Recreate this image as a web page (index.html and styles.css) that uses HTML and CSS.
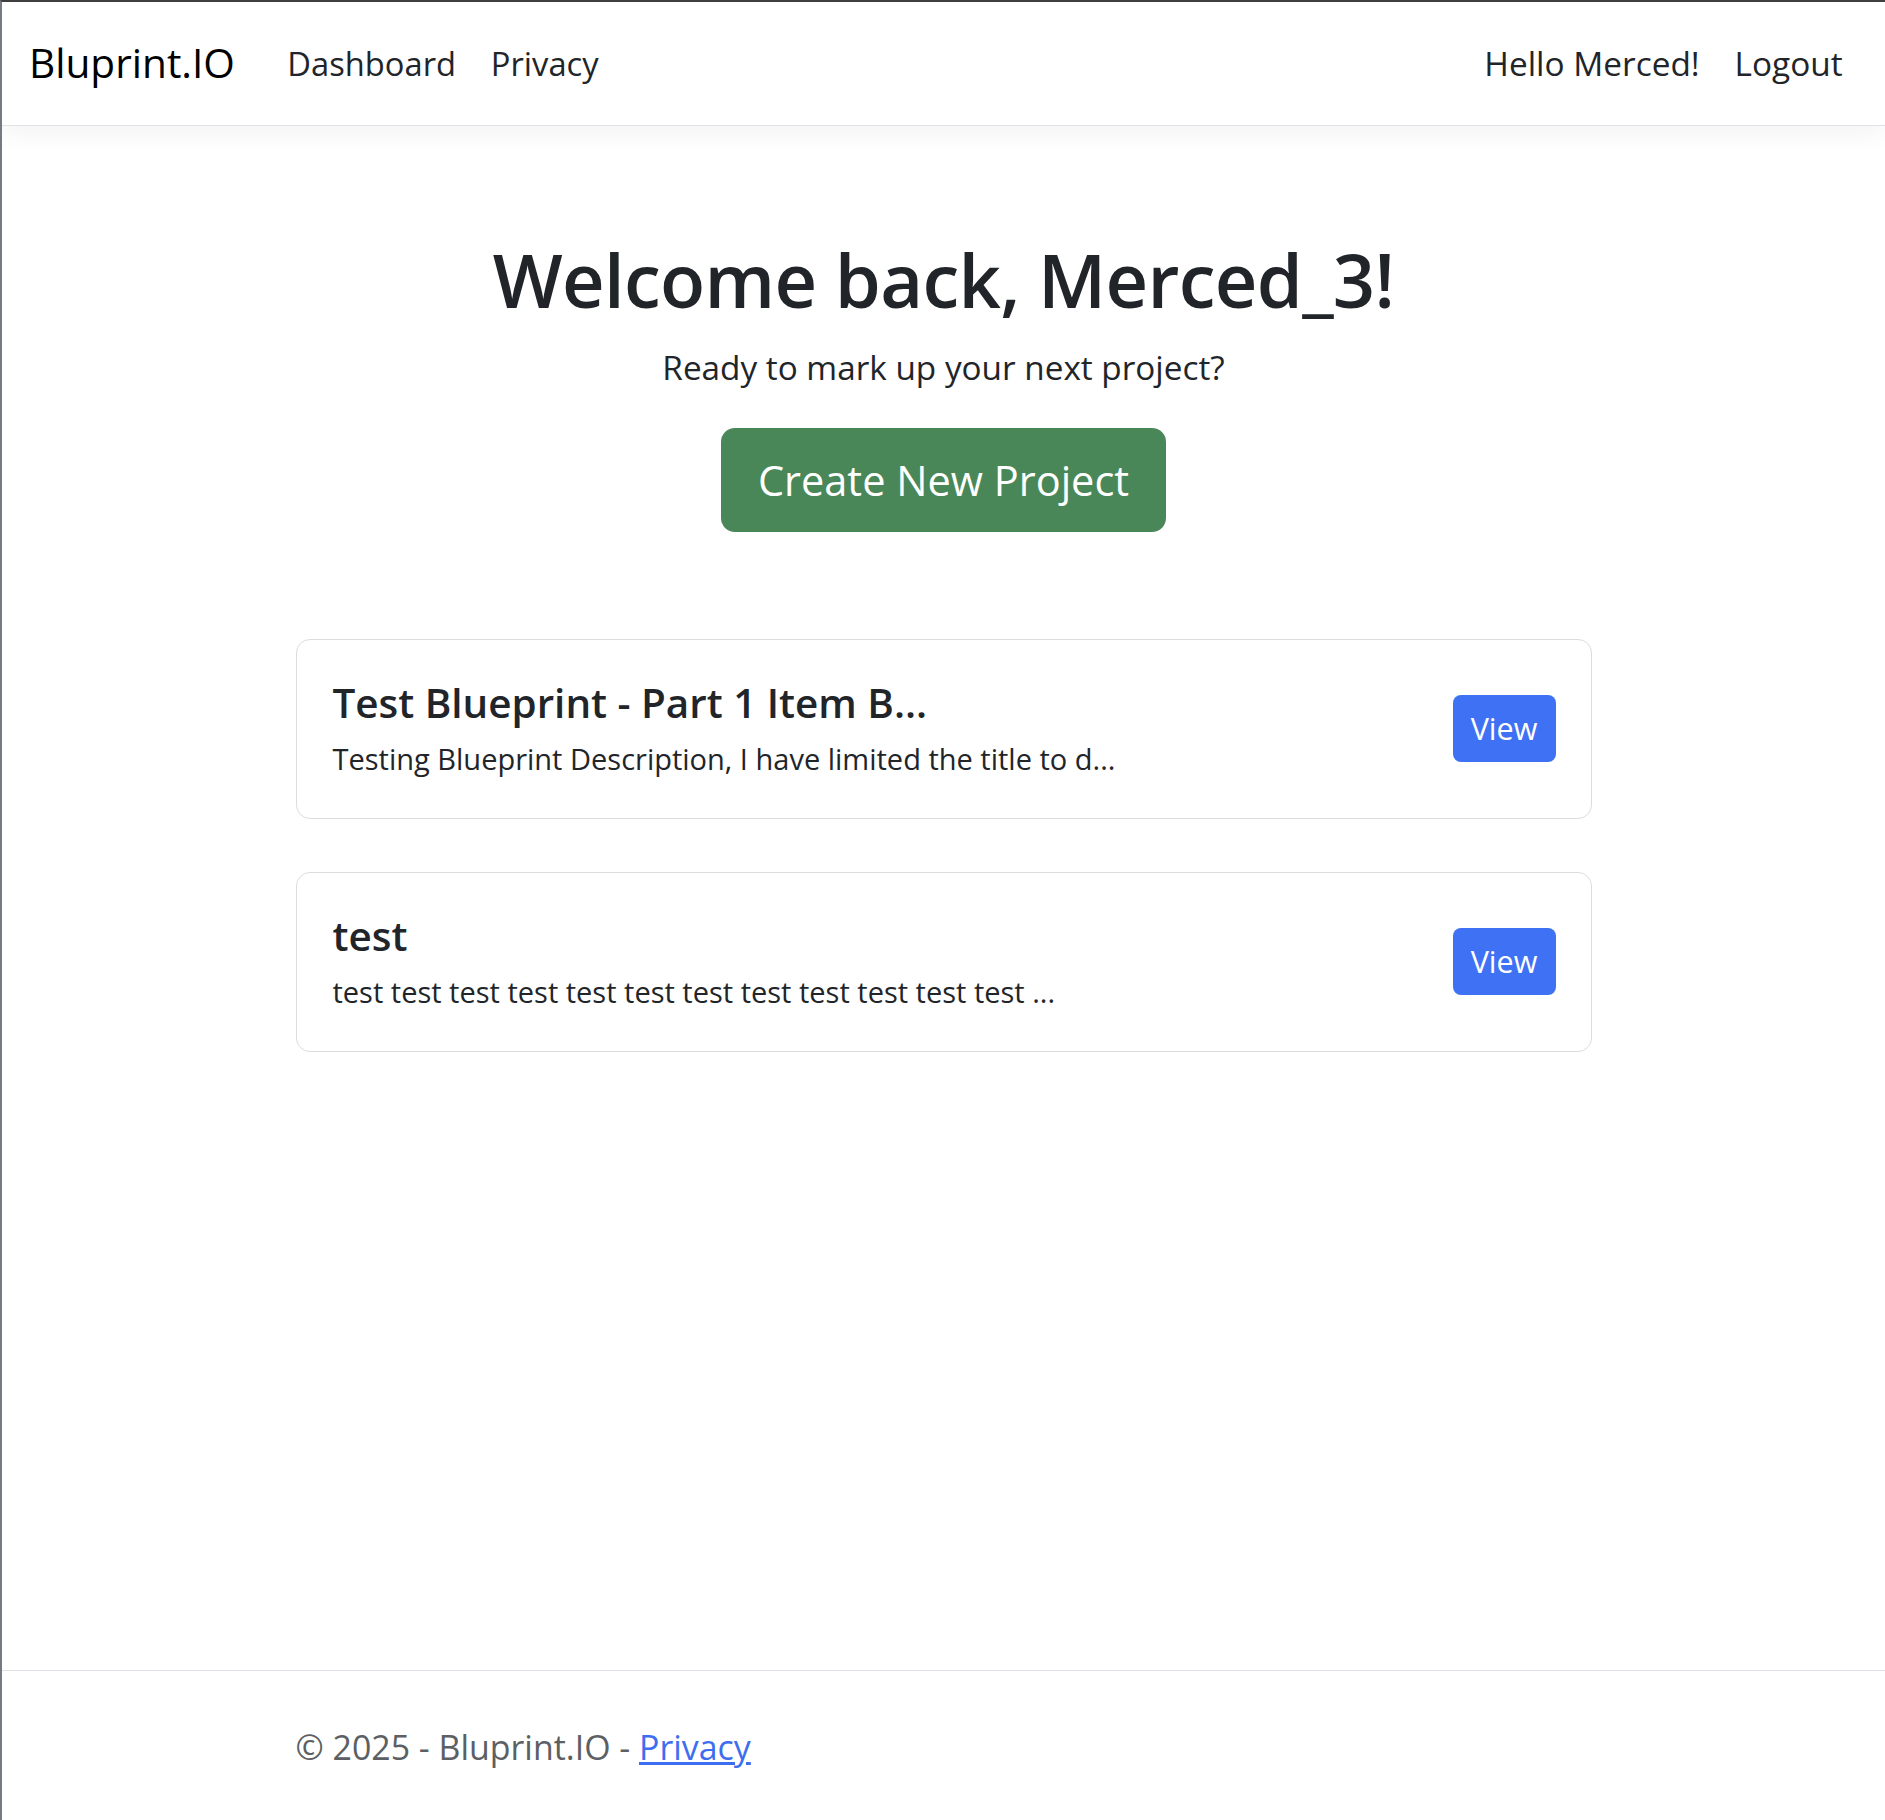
FILE: index.html
```html
<!DOCTYPE html>
<html lang="en">
<head>
<meta charset="utf-8">
<title>Dashboard - Bluprint.IO</title>
<link rel="stylesheet" href="styles.css">
</head>
<body>
<header class="site-header">
  <nav class="navbar">
    <a class="brand" href="#">Bluprint.IO</a>
    <ul class="nav nav-main">
      <li><a class="nav-link" href="#">Dashboard</a></li>
      <li><a class="nav-link" href="#">Privacy</a></li>
    </ul>
    <ul class="nav nav-user">
      <li><span class="nav-link">Hello Merced!</span></li>
      <li><a class="nav-link" href="#">Logout</a></li>
    </ul>
  </nav>
</header>
<main class="main">
  <div class="container">
    <section class="hero">
      <h1 class="hero-title">Welcome back, Merced_3!</h1>
      <p class="hero-lead">Ready to mark up your next project?</p>
      <div class="hero-action">
        <a class="btn-create" href="#">Create New Project</a>
      </div>
    </section>
    <div class="project-list">
      <article class="project-card">
        <div class="project-text">
          <h5 class="project-title">Test Blueprint - Part 1 Item B...</h5>
          <p class="project-desc">Testing Blueprint Description, I have limited the title to d...</p>
        </div>
        <a class="btn-view" href="#">View</a>
      </article>
      <article class="project-card">
        <div class="project-text">
          <h5 class="project-title">test</h5>
          <p class="project-desc">test test test test test test test test test test test test ...</p>
        </div>
        <a class="btn-view" href="#">View</a>
      </article>
    </div>
  </div>
</main>
<footer class="site-footer">
  <div class="container">&copy; 2025 - Bluprint.IO - <a class="footer-link" href="#">Privacy</a></div>
</footer>
</body>
</html>
```

FILE: styles.css
```css
html, body {
  margin: 0;
  padding: 0;
}

body {
  font-family: "Open Sans", "Noto Sans", sans-serif;
  color: #212529;
  background: #fff;
  border-top: 2px solid #3f3f3f;
  border-left: 2px solid #767b82;
  min-height: 100vh;
  box-sizing: border-box;
  display: flex;
  flex-direction: column;
}

.site-header {
  border-bottom: 1px solid #dee2e6;
  box-shadow: 0 8px 25px rgba(0, 0, 0, 0.05);
  background: #fff;
  position: relative;
  z-index: 1;
}

.navbar {
  height: 123px;
  display: flex;
  align-items: center;
  padding: 0 25px 0 27px;
}

.brand {
  font-size: 40.6px;
  line-height: 1.5;
  color: #000;
  text-decoration: none;
  margin-right: 35px;
}

.nav {
  display: flex;
  list-style: none;
  margin: 0;
  padding: 0;
}

.nav-user {
  margin-left: auto;
}

.nav-link {
  display: block;
  padding: 0 17.4px;
  font-size: 32.7px;
  line-height: 1.5;
  color: #212529;
  text-decoration: none;
}

.nav-user .nav-link {
  font-size: 33.4px;
}

.main {
  flex: 1;
}

.container {
  max-width: 1320px;
  padding: 0 12px;
  margin: 0 auto;
  box-sizing: border-box;
}

.hero {
  text-align: center;
  padding-top: 110px;
}

.hero-title {
  font-size: 74px;
  font-weight: 600;
  line-height: 1.2;
  letter-spacing: -0.7px;
  margin: 0;
}

.hero-lead {
  font-size: 33.3px;
  line-height: 1.5;
  margin: 18px 0 0;
}

.hero-action {
  display: flex;
  justify-content: center;
  margin-top: 35px;
}

.btn-create {
  display: block;
  height: 104px;
  line-height: 104px;
  padding: 0 37px;
  background: #498759;
  color: #fff;
  border-radius: 14px;
  font-size: 41.5px;
  text-decoration: none;
}

.project-list {
  display: flex;
  flex-direction: column;
  gap: 53px;
  margin-top: 107px;
}

.project-card {
  display: flex;
  align-items: center;
  justify-content: space-between;
  border: 1px solid #dcdcdc;
  border-radius: 14px;
  padding: 27.5px 35px 27.5px 36px;
}

.project-text {
  padding: 12px 0 9.5px;
}

.project-title {
  font-size: 40.4px;
  font-weight: 600;
  line-height: 48px;
  margin: 0;
}

.project-desc {
  font-size: 29px;
  line-height: 43.5px;
  margin: 10px 0 0;
}

.btn-view {
  display: block;
  width: 103px;
  height: 67px;
  line-height: 67px;
  text-align: center;
  background: #3f71f4;
  color: #fff;
  border-radius: 8px;
  font-size: 30.5px;
  text-decoration: none;
}

.site-footer {
  border-top: 1px solid #dee2e6;
  height: 150px;
  box-sizing: border-box;
  padding-top: 46px;
  line-height: 60px;
  font-size: 33.9px;
  color: #5c5f63;
  white-space: nowrap;
}

.footer-link {
  color: #3e6ef0;
  text-decoration: underline;
}
```
